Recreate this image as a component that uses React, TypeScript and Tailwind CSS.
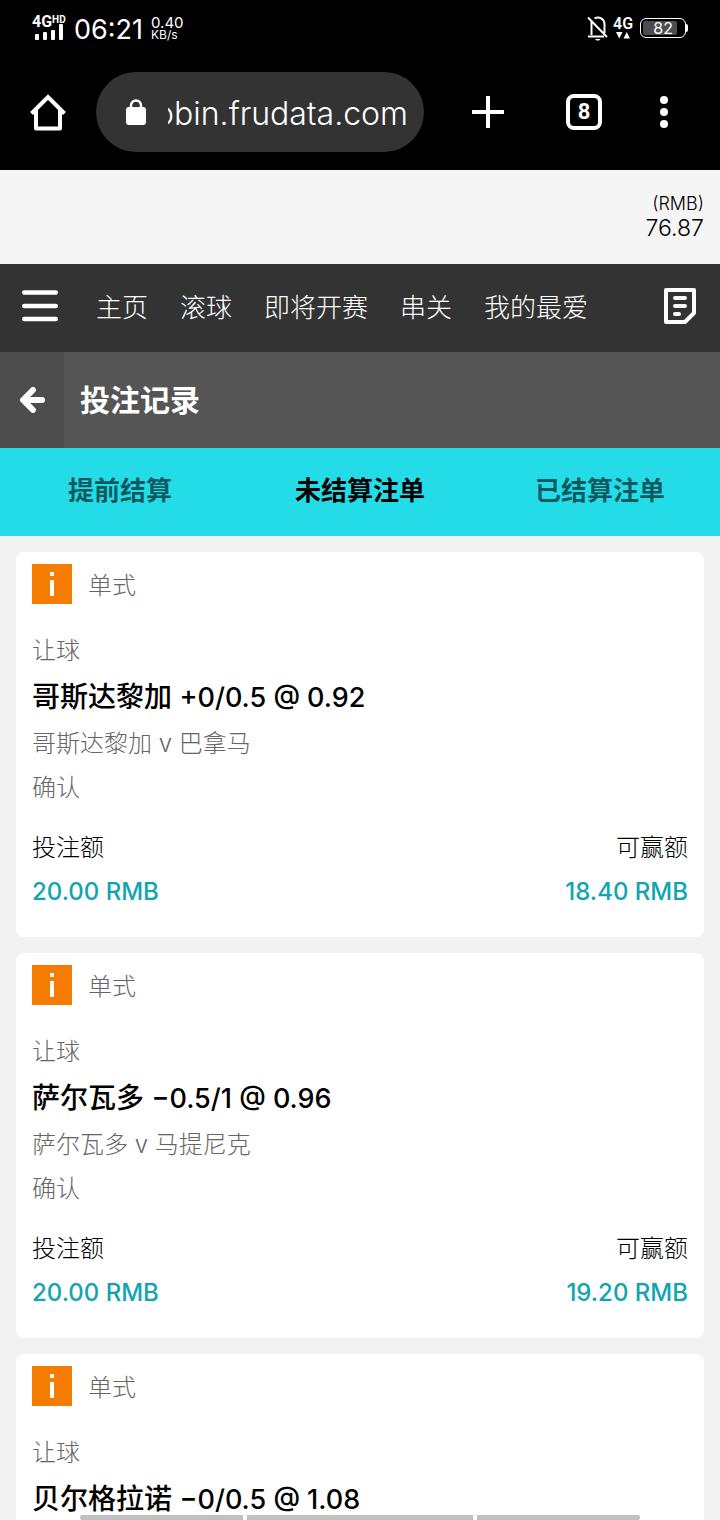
import React, { useState } from 'react';

type Bet = { id: number; team: string; line: string; match?: string; stake?: string; win?: string };

const bets: Bet[] = [
    { id: 1, team: '哥斯达黎加', line: '+0/0.5 @ 0.92', match: '哥斯达黎加 v 巴拿马', stake: '20.00', win: '18.40' },
    { id: 2, team: '萨尔瓦多', line: '−0.5/1 @ 0.96', match: '萨尔瓦多 v 马提尼克', stake: '20.00', win: '19.20' },
    { id: 3, team: '贝尔格拉诺', line: '−0/0.5 @ 1.08' },
];

const navLinks = ['主页', '滚球', '即将开赛', '串关', '我的最爱'];
const tabs = ['提前结算', '未结算注单', '已结算注单'];

const StatusBar = () => (
    <div className="flex h-14 items-center justify-between px-8 text-white">
        <div className="flex items-center">
            <div className="flex w-9 flex-col font-['Roboto'] font-bold">
                <div className="flex items-start">
                    <span className="text-[16px] leading-[14px]">4G</span>
                    <span className="text-[10px] leading-[9px]">HD</span>
                </div>
                <svg width="32" height="12" viewBox="0 0 32 12" fill="currentColor" className="overflow-visible" aria-hidden="true">
                    <rect x="3" y="5" width="4" height="6" rx="1" />
                    <rect x="11" y="3" width="4" height="8" rx="1" />
                    <rect x="19" y="1" width="4" height="10" rx="1" />
                    <rect x="27" y="-5" width="4" height="16" rx="1" />
                </svg>
            </div>
            <span className="mt-1 ml-1.5 text-[27px] leading-8">06:21</span>
            <div className="ml-2 flex flex-col">
                <span className="text-[15px] leading-[13px]">0.40</span>
                <span className="text-[12px] leading-[12px]">KB/s</span>
            </div>
        </div>
        <div className="flex items-center">
            <svg width="22" height="26" viewBox="0 0 22 26" fill="none" stroke="currentColor" strokeWidth="2" aria-hidden="true">
                <path d="M1 2.500L20 22M4.500 6.500v13.500M1 21.500h16M7.500 3.500C12 1 17.500 4 17.500 9v9" />
                <path d="M8 24h5.500l-1.500 1.500H9.500z" fill="currentColor" stroke="none" />
            </svg>
            <div className="ml-1 flex w-5 flex-col items-center">
                <span className="font-['Roboto'] text-[16px] font-semibold leading-[14px]">4G</span>
                <svg width="16" height="8" viewBox="0 0 16 8" fill="currentColor" aria-hidden="true">
                    <path d="M1 1h6.500L4.250 7.500zM8.500 7.500H15L11.750 1z" />
                </svg>
            </div>
            <div className="ml-[7px] flex items-center">
                <div className="flex h-5 w-[46px] items-center rounded-md border border-white p-0.5">
                    <div className="flex h-full w-[34px] items-center justify-end rounded-xs bg-[#4d4d4d] pr-1 text-[16px]">
                        82
                    </div>
                </div>
                <div className="h-2 w-0.5 rounded-r bg-white" />
            </div>
        </div>
    </div>
);

const BrowserBar = () => (
    <div className="flex items-center pt-4 pr-8 pb-[18px] pl-6 text-white">
        <button aria-label="Home" className="flex size-12 items-center justify-center">
            <svg width="36" height="38" viewBox="0 0 36 38" fill="none" stroke="currentColor" strokeWidth="4" strokeLinejoin="round">
                <path d="M1.500 20.500L18 4l16.500 16.500" strokeLinejoin="miter" />
                <path d="M6 17v18.500h24V17" />
            </svg>
        </button>
        <div className="ml-6 flex h-20 flex-1 items-center rounded-full bg-[#333] pr-4 pl-[30px]">
            <svg width="20" height="27" viewBox="0 0 20 27" aria-hidden="true" className="shrink-0">
                <path d="M5 10V6.500a5 5 0 0 1 10 0V10" fill="none" stroke="#fff" strokeWidth="2.400" />
                <rect y="8" width="20" height="18" rx="3" fill="#fff" />
            </svg>
            <div className="mt-1 ml-[22px] flex w-0 flex-1 justify-end overflow-hidden">
                <span className="text-[32px] font-light leading-10">obin.frudata.com</span>
            </div>
        </div>
        <button aria-label="New tab" className="ml-10 flex size-12 items-center justify-center">
            <svg width="32" height="32" viewBox="0 0 32 32" stroke="currentColor" strokeWidth="4">
                <path d="M16 0v32M0 16h32" />
            </svg>
        </button>
        <button aria-label="Tabs" className="ml-12 flex size-12 items-center justify-center">
            <span className="flex size-9 items-center justify-center rounded-lg border-4 border-white font-['Roboto'] text-[22px] font-bold leading-none">
                8
            </span>
        </button>
        <button aria-label="More" className="ml-8 flex size-12 items-center justify-center">
            <svg width="8" height="32" viewBox="0 0 8 32" fill="currentColor">
                <circle cx="4" cy="4" r="4" />
                <circle cx="4" cy="16" r="4" />
                <circle cx="4" cy="28" r="4" />
            </svg>
        </button>
    </div>
);

const SiteNav = () => (
    <nav className="flex h-22 items-center bg-[#333] pr-6 pl-[22px] text-white">
        <button aria-label="Menu" className="pb-1">
            <svg width="36" height="32" viewBox="0 0 36 32" stroke="currentColor" strokeWidth="4.500" strokeLinecap="round">
                <path d="M2.250 2.500h31.500M2.250 16h31.500M2.250 29h31.500" />
            </svg>
        </button>
        <div className="ml-[38px] flex flex-1 gap-8 text-[26px] font-light leading-10">
            {navLinks.map((label) => (
                <a key={label} href="#" className="whitespace-nowrap">{label}</a>
            ))}
        </div>
        <button aria-label="Bet slip" className="pb-1">
            <svg width="32" height="36" viewBox="0 0 32 36" fill="none" stroke="currentColor" strokeWidth="4" strokeLinejoin="round">
                <path d="M2 2h28v23l-9 9H2z" />
                <path d="M11 10h10M11 18h10M11 26h4" strokeLinecap="round" />
            </svg>
        </button>
    </nav>
);

const BetCard = ({ bet }: { bet: Bet }) => (
    <article className="min-h-[385px] shrink-0 rounded-lg bg-white px-4 pt-3 pb-[23px] text-[24px] font-light leading-11 text-[#666]">
        <div className="mb-[25px] flex h-10 items-center gap-4">
            <button aria-label="Info" className="flex size-10 items-center justify-center bg-[#f57c00]">
                <svg width="4" height="24" viewBox="0 0 4 24" fill="#fff">
                    <rect width="4" height="4" />
                    <rect y="8" width="4" height="16" />
                </svg>
            </button>
            <span className="mt-1">单式</span>
        </div>
        <p>让球</p>
        <h2 className="text-[28px] font-medium leading-[49px] text-black">
            {bet.team} <span className="text-[27px]">{bet.line}</span>
        </h2>
        {bet.match && (
            <>
                <p>{bet.match}</p>
                <p>确认</p>
                <dl className="mt-4 flex justify-between">
                    <div>
                        <dt className="text-black">投注额</dt>
                        <dd className="font-medium text-[#12a5af]">{bet.stake} RMB</dd>
                    </div>
                    <div className="text-right">
                        <dt className="text-black">可赢额</dt>
                        <dd className="font-medium text-[#12a5af]">{bet.win} RMB</dd>
                    </div>
                </dl>
            </>
        )}
    </article>
);

export default function App() {
    const [activeTab, setActiveTab] = useState('未结算注单');

    return (
        <div className="relative flex h-screen flex-col overflow-hidden bg-[#f2f2f2] font-['Inter','Noto_Sans_CJK_SC',sans-serif]" lang="zh-CN">
            <header className="bg-black">
                <StatusBar />
                <BrowserBar />
            </header>
            <div className="flex h-[94px] flex-col items-end justify-center bg-[#f5f5f5] px-4 pb-0.5 font-light text-black">
                <span className="text-[18px] leading-6">(RMB)</span>
                <span className="text-[23px] leading-6">76.87</span>
            </div>
            <SiteNav />
            <div className="flex h-24 items-center bg-[#555] text-white">
                <button aria-label="Back" className="flex h-full w-16 items-center justify-center bg-[#4d4d4d]">
                    <svg width="26" height="26" viewBox="0 0 26 26" fill="none" stroke="currentColor" strokeWidth="6" strokeLinecap="round" strokeLinejoin="round">
                        <path d="M14 3L4 13l10 10M5 13h18" />
                    </svg>
                </button>
                <h1 className="ml-4 text-[30px] font-bold leading-10">投注记录</h1>
            </div>
            <div className="grid h-22 shrink-0 grid-cols-3 bg-[#24dce8] text-[26px] font-bold">
                {tabs.map((tab) => (
                    <button
                        key={tab}
                        onClick={() => setActiveTab(tab)}
                        className={tab === activeTab ? 'pb-1 text-black' : 'pb-1 text-black/60'}
                    >
                        {tab}
                    </button>
                ))}
            </div>
            <main className="flex min-h-0 flex-1 flex-col gap-4 overflow-hidden p-4">
                {bets.map((bet) => (
                    <BetCard key={bet.id} bet={bet} />
                ))}
            </main>
            {/* system gesture hints */}
            <div className="absolute inset-x-20 bottom-0 flex h-[5px] gap-1">
                <div className="w-[163px] rounded-l bg-[#c0c0c0]" />
                <div className="flex-1 bg-[#c0c0c0]" />
                <div className="w-[163px] rounded-r bg-[#c0c0c0]" />
            </div>
        </div>
    );
}
